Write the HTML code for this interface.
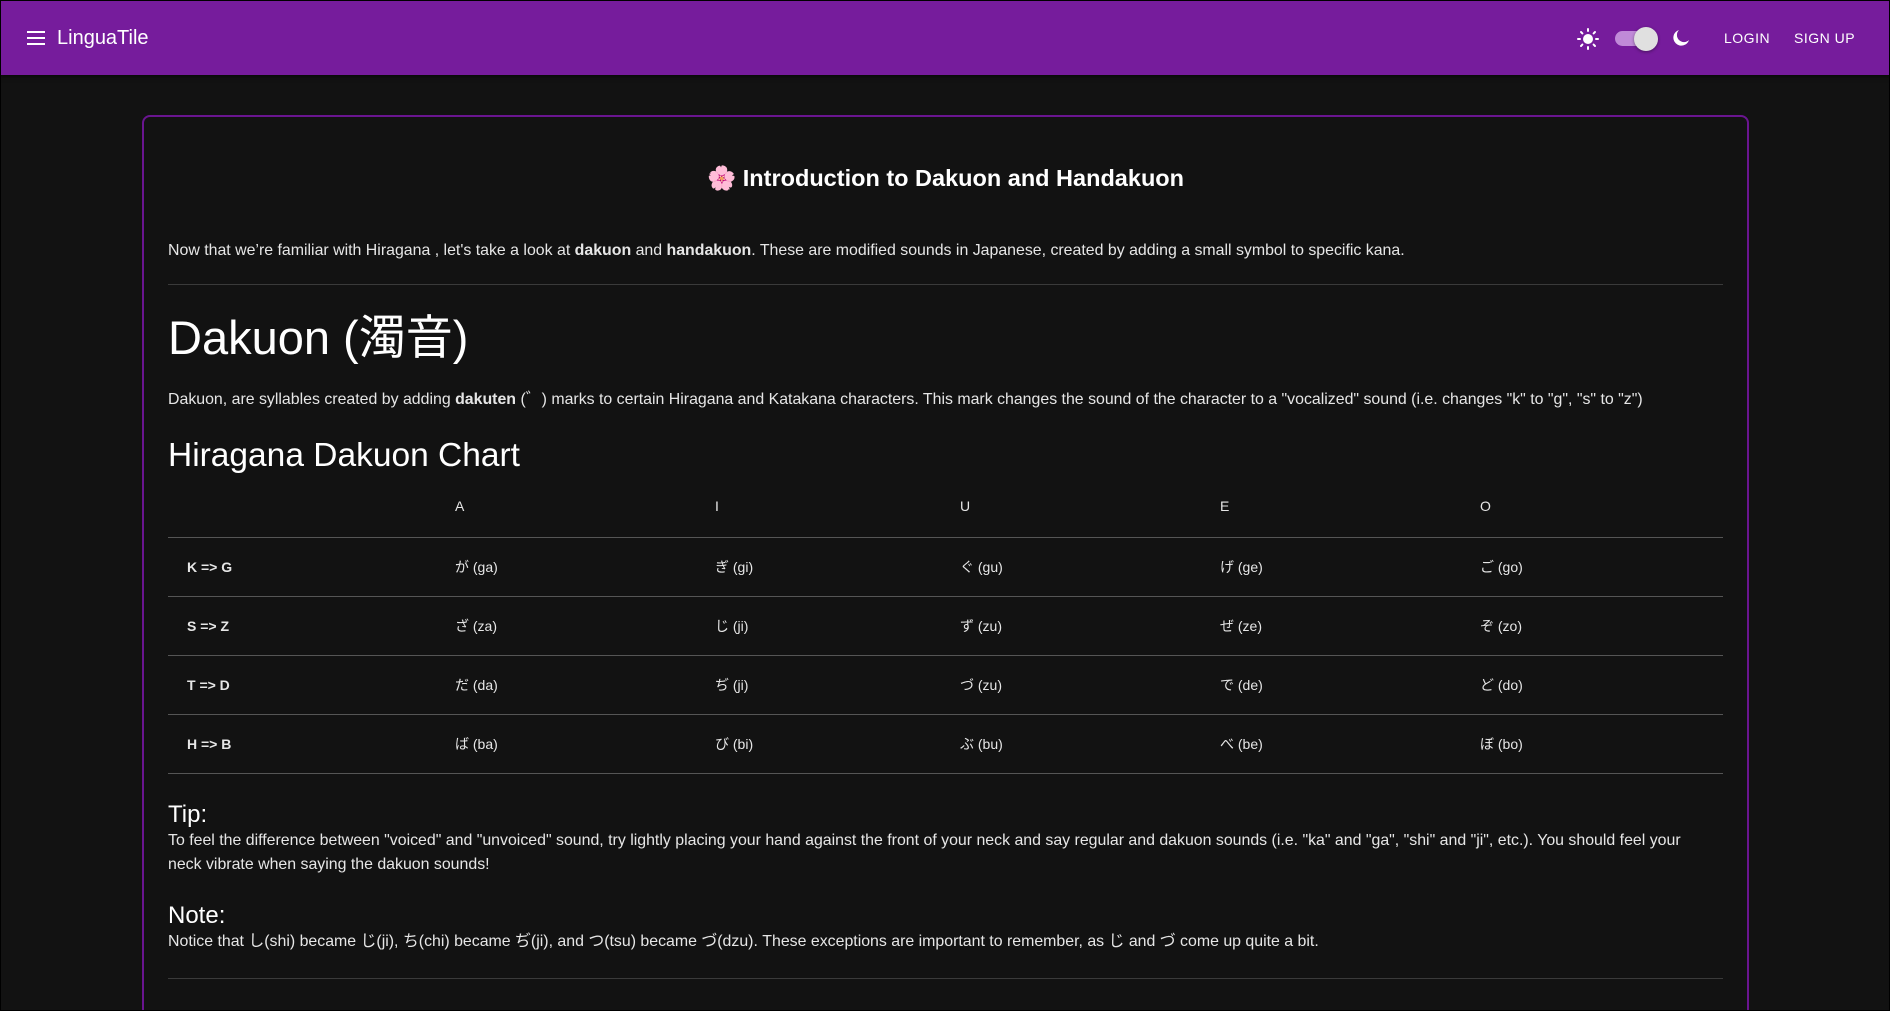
<!DOCTYPE html>
<html><head><meta charset="utf-8"><style>
*{box-sizing:border-box;margin:0;padding:0}
html,body{width:1890px;height:1011px;overflow:hidden;background:#121212;font-family:"Liberation Sans","Noto Sans CJK JP",sans-serif;color:#e6e6e6}
.wrap{position:absolute;left:0;top:0;width:1890px;height:1011px;overflow:hidden}
.frame{position:absolute;left:0;top:0;width:1890px;height:1011px;border:1px solid #000;pointer-events:none;z-index:9}
header{position:absolute;left:0;top:0;width:1890px;height:75px;background:#761c9c;box-shadow:0 2px 4px rgba(0,0,0,.5)}
.ham{position:absolute;left:27px;top:31px;width:18px;height:14px}
.ham i{display:block;height:2px;background:#fff;margin-bottom:4px}
.logo{position:absolute;left:57px;top:27px;font-size:20px;color:#fff}
.nav{position:absolute;top:30px;font-size:14px;color:#fff;letter-spacing:.5px}
.card{position:absolute;left:142px;top:115px;width:1607px;height:900px;border:2px solid #6a1590;border-bottom:none;border-radius:8px 8px 0 0;background:#121212}
.in{position:absolute;left:24px;width:1555px}
h3{font-size:23.5px;font-weight:bold;text-align:center;color:#fff}
p{font-size:15.9px;line-height:24px}
hr{border:0;border-top:1px solid #3a3a3a}
table{border-collapse:collapse;width:1555px;font-size:14px}
td{height:59px;border-bottom:1px solid #555;vertical-align:middle}
tr.h td{height:62px}
</style></head><body><div class="wrap">
<header>
<div class="ham"><i></i><i></i><i></i></div>
<div class="logo">LinguaTile</div>
<svg style="position:absolute;left:1577px;top:28px" width="22" height="22" viewBox="0 0 22 22" fill="#fff"><circle cx="11" cy="11" r="5"/><g stroke="#fff" stroke-width="2" stroke-linecap="round"><path d="M11 1v2M11 19v2M1 11h2M19 11h2M4 4l1.4 1.4M16.6 16.6L18 18M4 18l1.4-1.4M16.6 5.4L18 4"/></g></svg>
<div style="position:absolute;left:1615px;top:31px;width:36px;height:15px;border-radius:8px;background:#c08ad8"></div>
<div style="position:absolute;left:1634px;top:27px;width:24px;height:24px;border-radius:50%;background:#e0e0e0;box-shadow:0 1px 3px rgba(0,0,0,.4)"></div>
<svg style="position:absolute;left:1671px;top:28px" width="20" height="20" viewBox="0 0 20 20"><path d="M8 2a8 8 0 1 0 10 10A6.5 6.5 0 0 1 8 2z" fill="#fff"/></svg>
<div class="nav" style="left:1724px">LOGIN</div>
<div class="nav" style="left:1794px">SIGN UP</div>
</header>
<div class="card">
<h3 class="in" style="top:47px">🌸 Introduction to Dakuon and Handakuon</h3>
<p class="in" style="top:122px">Now that we’re familiar with Hiragana , let's take a look at <b>dakuon</b> and <b>handakuon</b>. These are modified sounds in Japanese, created by adding a small symbol to specific kana.</p>
<hr class="in" style="top:167px">
<div class="in" style="top:191px;font-size:47px;line-height:60px;color:#fff">Dakuon (濁音)</div>
<p class="in" style="top:271px">Dakuon, are syllables created by adding <b>dakuten</b> (゛) marks to certain Hiragana and Katakana characters. This mark changes the sound of the character to a "vocalized" sound (i.e. changes "k" to "g", "s" to "z")</p>
<div class="in" style="top:318px;font-size:33.5px;line-height:42px;color:#fff">Hiragana Dakuon Chart</div>
<table class="in" style="top:358px">
<colgroup><col style="width:287px"><col style="width:260px"><col style="width:245px"><col style="width:260px"><col style="width:260px"><col></colgroup>
<tr class="h"><td></td><td>A</td><td>I</td><td>U</td><td>E</td><td>O</td></tr>
<tr><td style="padding-left:19px"><b>K =&gt; G</b></td><td>が (ga)</td><td>ぎ (gi)</td><td>ぐ (gu)</td><td>げ (ge)</td><td>ご (go)</td></tr>
<tr><td style="padding-left:19px"><b>S =&gt; Z</b></td><td>ざ (za)</td><td>じ (ji)</td><td>ず (zu)</td><td>ぜ (ze)</td><td>ぞ (zo)</td></tr>
<tr><td style="padding-left:19px"><b>T =&gt; D</b></td><td>だ (da)</td><td>ぢ (ji)</td><td>づ (zu)</td><td>で (de)</td><td>ど (do)</td></tr>
<tr><td style="padding-left:19px"><b>H =&gt; B</b></td><td>ば (ba)</td><td>び (bi)</td><td>ぶ (bu)</td><td>べ (be)</td><td>ぼ (bo)</td></tr>
</table>
<div class="in" style="top:684px;font-size:24px;color:#fff">Tip:</div>
<p class="in" style="top:712px;width:1530px">To feel the difference between "voiced" and "unvoiced" sound, try lightly placing your hand against the front of your neck and say regular and dakuon sounds (i.e. "ka" and "ga", "shi" and "ji", etc.). You should feel your neck vibrate when saying the dakuon sounds!</p>
<div class="in" style="top:785px;font-size:24px;color:#fff">Note:</div>
<p class="in" style="top:813px">Notice that し(shi) became じ(ji), ち(chi) became ぢ(ji), and つ(tsu) became づ(dzu). These exceptions are important to remember, as じ and づ come up quite a bit.</p>
<hr class="in" style="top:861px">
</div>
<div class="frame"></div>
</div></body></html>
